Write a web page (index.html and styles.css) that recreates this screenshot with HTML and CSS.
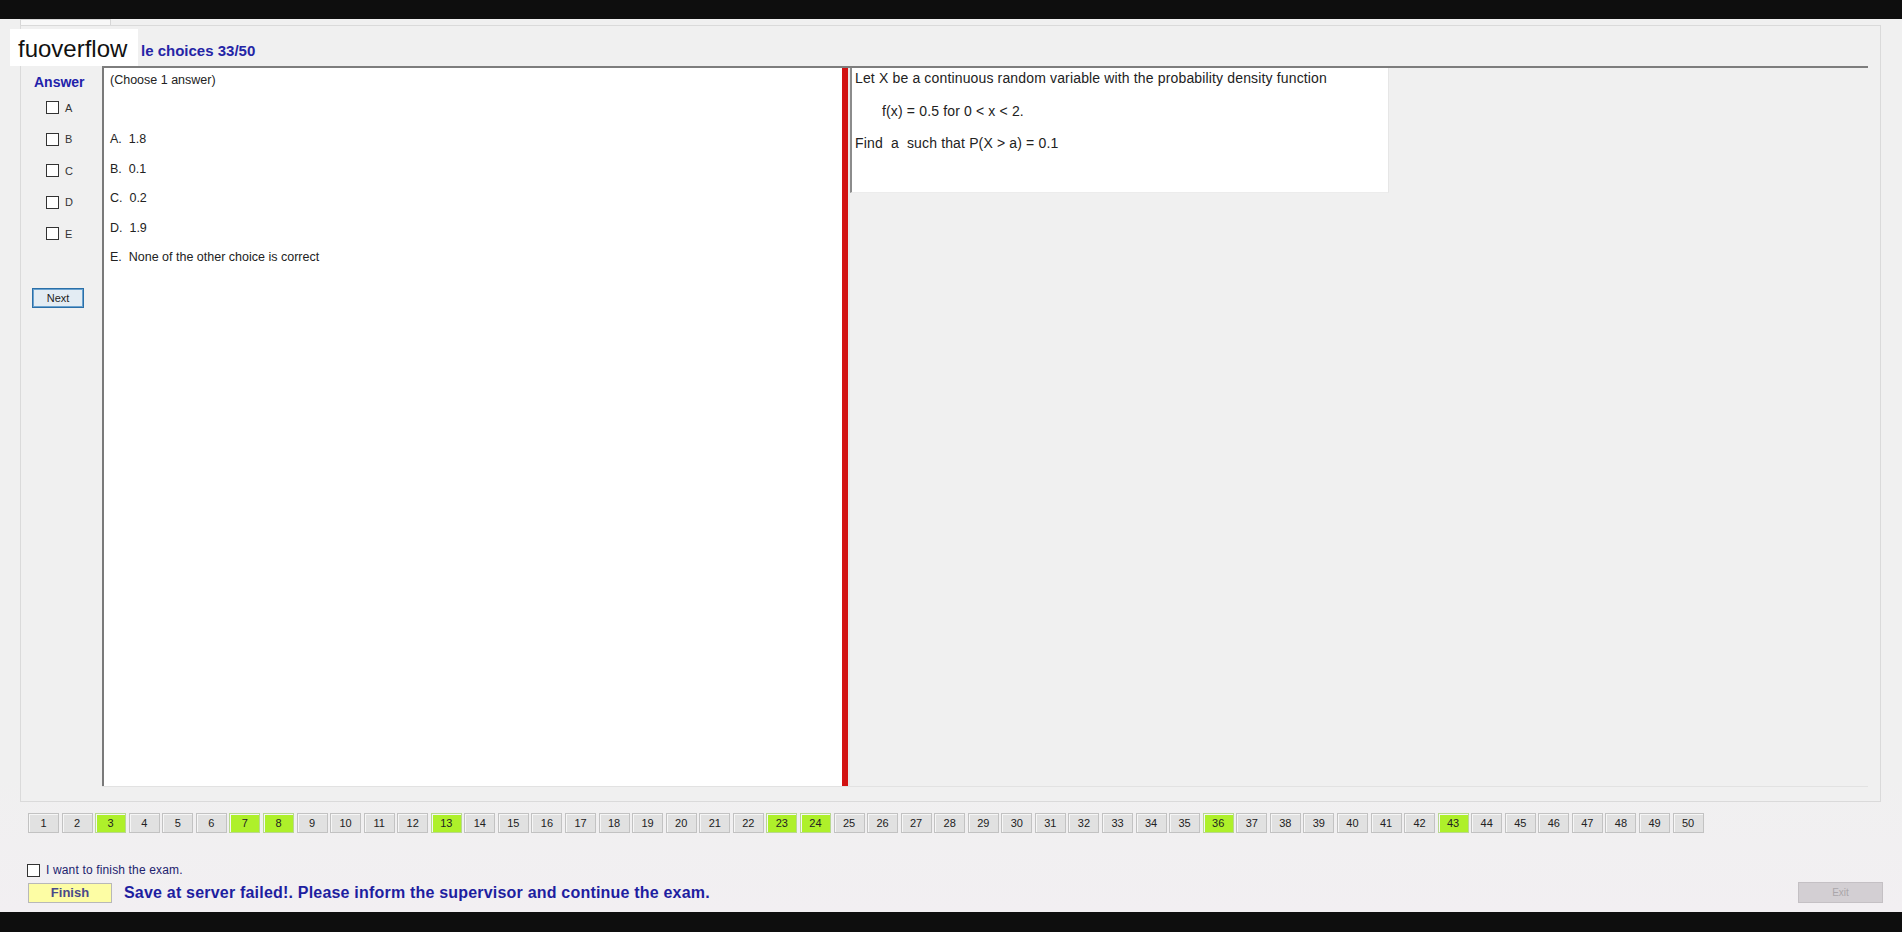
FILE: index.html
```html
<!DOCTYPE html>
<html>
<head>
<meta charset="utf-8">
<title>Exam</title>
<link rel="stylesheet" href="styles.css">
</head>
<body>
<div class="topbar"></div>
<div class="main">
  <div class="tab"></div>
  <div class="panel">
    <div class="header">le choices 33/50</div>
    <div class="body">
      <div class="answers">
        <div class="ans-title">Answer</div>
        <div class="ans-list">
          <div class="ans-row"><span class="cb"></span><span class="ans-label">A</span></div>
          <div class="ans-row"><span class="cb"></span><span class="ans-label">B</span></div>
          <div class="ans-row"><span class="cb"></span><span class="ans-label">C</span></div>
          <div class="ans-row"><span class="cb"></span><span class="ans-label">D</span></div>
          <div class="ans-row"><span class="cb"></span><span class="ans-label">E</span></div>
        </div>
        <button class="next-btn">Next</button>
      </div>
      <div class="qarea">
        <div class="choices">
          <div class="choose">(Choose 1 answer)</div>
          <div class="opts">
            <div class="opt">A.&nbsp; 1.8</div>
            <div class="opt">B.&nbsp; 0.1</div>
            <div class="opt">C.&nbsp; 0.2</div>
            <div class="opt">D.&nbsp; 1.9</div>
            <div class="opt">E.&nbsp; None of the other choice is correct</div>
          </div>
        </div>
        <div class="splitter"></div>
        <div class="qright">
          <div class="qbox">
            <p class="qline">Let X be a continuous random variable with the probability density function</p>
            <p class="qline indent">f(x) = 0.5 for 0 &lt; x &lt; 2.</p>
            <p class="qline">Find&nbsp; a&nbsp; such that P(X &gt; a) = 0.1</p>
          </div>
        </div>
      </div>
    </div>
  </div>
  <div class="nav">
    <span class="nb">1</span><span class="nb">2</span><span class="nb done">3</span><span class="nb">4</span><span class="nb">5</span><span class="nb">6</span><span class="nb done">7</span><span class="nb done">8</span><span class="nb">9</span><span class="nb">10</span>
    <span class="nb">11</span><span class="nb">12</span><span class="nb done">13</span><span class="nb">14</span><span class="nb">15</span><span class="nb">16</span><span class="nb">17</span><span class="nb">18</span><span class="nb">19</span><span class="nb">20</span>
    <span class="nb">21</span><span class="nb">22</span><span class="nb done">23</span><span class="nb done">24</span><span class="nb">25</span><span class="nb">26</span><span class="nb">27</span><span class="nb">28</span><span class="nb">29</span><span class="nb">30</span>
    <span class="nb">31</span><span class="nb">32</span><span class="nb">33</span><span class="nb">34</span><span class="nb">35</span><span class="nb done">36</span><span class="nb">37</span><span class="nb">38</span><span class="nb">39</span><span class="nb">40</span>
    <span class="nb">41</span><span class="nb">42</span><span class="nb done">43</span><span class="nb">44</span><span class="nb">45</span><span class="nb">46</span><span class="nb">47</span><span class="nb">48</span><span class="nb">49</span><span class="nb">50</span>
  </div>
  <div class="finish-check"><span class="cb"></span><span class="finish-label">I want to finish the exam.</span></div>
  <div class="finish-row">
    <button class="finish-btn">Finish</button>
    <span class="save-msg">Save at server failed!. Please inform the supervisor and continue the exam.</span>
    <button class="exit-btn" disabled>Exit</button>
  </div>
</div>
<div class="bottombar"></div>
<div class="watermark">fuoverflow</div>
</body>
</html>
```

FILE: styles.css
```css
html, body {
  margin: 0;
  padding: 0;
}
body {
  width: 1902px;
  height: 932px;
  overflow: hidden;
  background: #f0f0f0;
  font-family: "Liberation Sans", Arial, sans-serif;
  color: #222;
}
.topbar {
  height: 19px;
  background: #0e0e0e;
}
.bottombar {
  height: 20px;
  background: #0e0e0e;
}
.main {
  height: 893px;
  display: flex;
  flex-direction: column;
  background: linear-gradient(to bottom, #f0f0f0 0%, #f0f0f0 85%, #f2eff2 100%);
}
.tab {
  margin-left: 20px;
  width: 89px;
  height: 5px;
  border: 1px solid #d6d6d6;
  border-bottom: none;
  background: #f8f8f8;
}
.panel {
  margin-left: 20px;
  width: 1859px;
  height: 775px;
  border: 1px solid #dadada;
  background: #f0f0f0;
  display: flex;
  flex-direction: column;
}
.header {
  height: 23px;
  padding-top: 17px;
  padding-left: 120px;
  font-size: 15px;
  line-height: 16px;
  font-weight: bold;
  color: #2525a6;
}
.body {
  display: flex;
  height: 721px;
}
.answers {
  width: 81px;
  display: flex;
  flex-direction: column;
  align-items: flex-start;
}
.ans-title {
  padding-top: 8px;
  padding-left: 13px;
  font-size: 14px;
  line-height: 16px;
  font-weight: bold;
  color: #2222aa;
}
.ans-list {
  margin-top: 2px;
  display: flex;
  flex-direction: column;
}
.ans-row {
  height: 31.5px;
  display: flex;
  align-items: center;
  padding-left: 25px;
}
.cb {
  display: inline-block;
  width: 11px;
  height: 11px;
  border: 1px solid #333;
  background: #fff;
}
.ans-label {
  margin-left: 6px;
  font-size: 11px;
  color: #333;
}
.next-btn {
  margin-top: 38px;
  margin-left: 11px;
  width: 52px;
  height: 20px;
  padding: 0;
  font-family: "Liberation Sans", Arial, sans-serif;
  font-size: 11px;
  color: #222;
  background: #e3ecf3;
  border: 1px solid #2a6fa8;
  box-shadow: inset 0 0 0 1px #6aa2cf;
}
.qarea {
  width: 1766px;
  display: flex;
  border-top: 2px solid #7d7d7d;
  border-bottom: 1px solid #e2e2e2;
  height: 718px;
}
.choices {
  background: #fff;
  border-left: 2px solid #7a7a7a;
  font-size: 12.5px;
  color: #222;
  padding-left: 6px;
  box-sizing: border-box;
  width: 740px;
}
.choose {
  margin-top: 4px;
  line-height: 16px;
}
.opts {
  margin-top: 37px;
}
.opt {
  height: 29.5px;
  line-height: 29.5px;
}
.splitter {
  width: 6px;
  background: #d21212;
  border-right: 2px solid #e8e8e8;
}
.qright {
  flex: 1;
  display: flex;
  align-items: flex-start;
}
.qbox {
  width: 533px;
  height: 124px;
  background: #fff;
  border-left: 2px solid #8c8c8c;
  border-right: 1px solid #e6e6e6;
  border-bottom: 1px solid #ececec;
  padding-left: 3px;
  font-size: 14px;
  letter-spacing: 0.15px;
  color: #222;
}
.qline {
  margin: 0;
  line-height: 16px;
  margin-top: 16.5px;
}
.qline:first-child {
  margin-top: 2px;
}
.indent {
  padding-left: 27px;
}
.nav {
  margin-top: 11px;
  margin-left: 28px;
  display: flex;
  gap: 2.57px;
}
.nb {
  width: 29px;
  height: 18px;
  border: 1px solid #c2c2c2;
  background: #e1e1e1;
  font-size: 11px;
  line-height: 18px;
  text-align: center;
  color: #222;
  box-shadow: inset 1px 1px 0 #f6f6f6;
}
.nb.done {
  background: #aef02a;
  border-color: #b8d890;
}
.finish-check {
  margin-top: 31px;
  margin-left: 27px;
  display: flex;
  align-items: center;
  height: 12px;
}
.finish-label {
  margin-left: 6px;
  font-size: 12px;
  letter-spacing: 0.15px;
  color: #22226e;
}
.finish-row {
  margin-top: 6px;
  display: flex;
  align-items: center;
  height: 21px;
}
.finish-btn {
  margin-left: 28px;
  width: 84px;
  height: 20px;
  padding: 0;
  background: #fdfda4;
  border: 1px solid #b8b8b8;
  font-family: "Liberation Sans", Arial, sans-serif;
  font-size: 13px;
  font-weight: bold;
  color: #4a4a8a;
}
.save-msg {
  margin-left: 12px;
  font-size: 16px;
  letter-spacing: 0.2px;
  font-weight: bold;
  color: #1e1ea0;
}
.exit-btn {
  margin-left: auto;
  margin-right: 19px;
  width: 85px;
  height: 21px;
  padding: 0;
  background: #d3cfd3;
  border: 1px solid #c4c0c4;
  font-family: "Liberation Sans", Arial, sans-serif;
  font-size: 10px;
  color: #aaa6aa;
}
.watermark {
  position: absolute;
  left: 10px;
  top: 29px;
  width: 120px;
  height: 34px;
  padding-top: 3px;
  padding-left: 8px;
  background: #fff;
  font-size: 24px;
  line-height: 34px;
  color: #111;
}
```
